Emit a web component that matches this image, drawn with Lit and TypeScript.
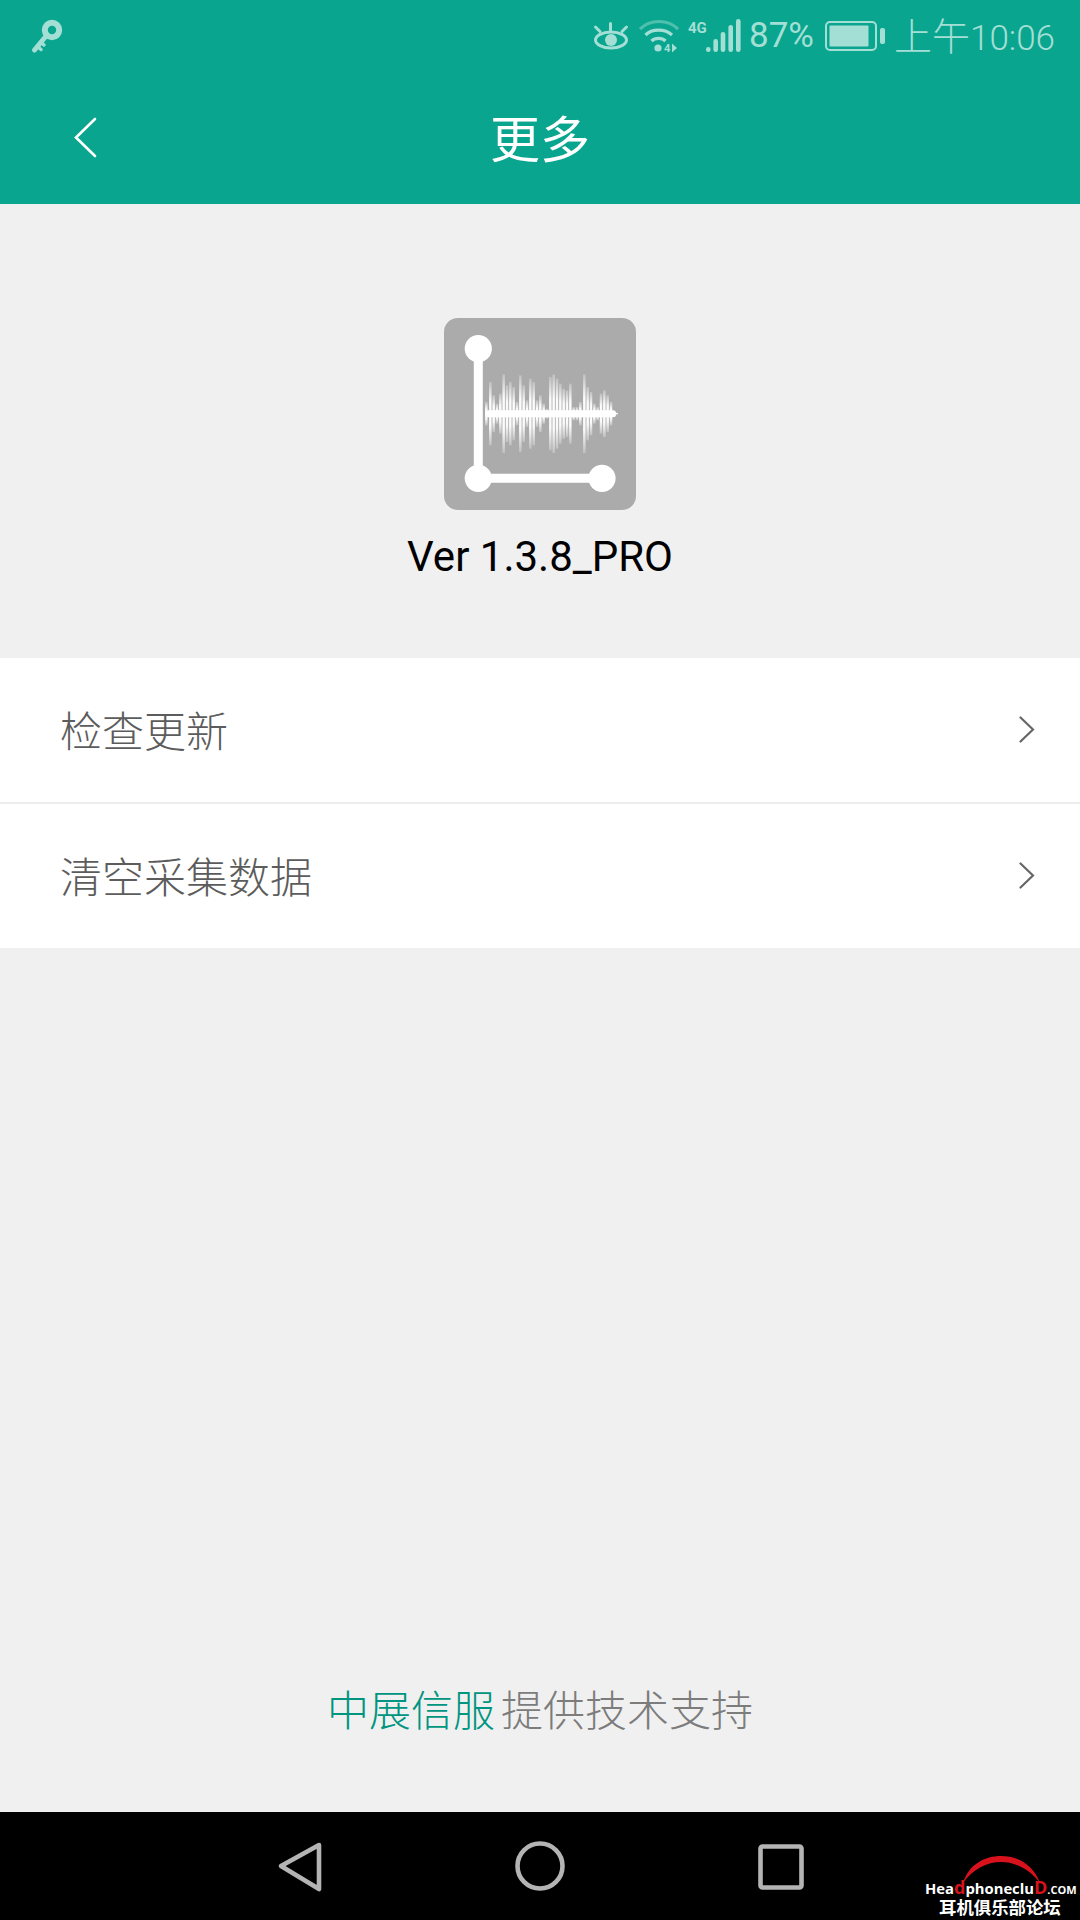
import { LitElement, html, css, svg } from "lit";
import { customElement } from "lit/decorators.js";

const WAVE: [number, number][] = [
  [197,35],[209,95],[219,55],[229,30],[239,60],[249,118],[259,85],[269,95],[279,80],[289,35],
  [299,115],[309,85],[319,40],[329,105],[339,95],[349,40],[359,55],[369,30],[379,15],[389,110],
  [399,118],[409,105],[419,90],[429,75],[439,70],[449,90],[459,20],[469,20],[479,35],[491,118],
  [501,80],[511,65],[521,30],[531,20],[541,60],[551,70],[561,55],[571,35],[581,10],[588,3],
];

const chevron = html`<svg class="chev" width="16" height="28" viewBox="0 0 16 28" fill="none">
  <path d="M1.5 1.5L14 13.5L1.5 25.5" stroke="#666" stroke-width="2.2" stroke-linecap="round" stroke-linejoin="miter"/>
</svg>`;

@customElement("app-root")
export class AppRoot extends LitElement {
  static styles = css`
    :host { display: block; width: 1080px; height: 1920px; overflow: hidden; background: #f0f0f0;
      font-family: Roboto, "Noto Sans CJK SC", sans-serif; }
    .page { display: flex; flex-direction: column; height: 1920px; }
    .head { background: #0aa58f; height: 204px; flex: none; display: flex; flex-direction: column; }
    .status { height: 72px; display: flex; align-items: center; padding: 0 25px 0 30px; color: #a3dfd5; }
    .status svg { display: block; flex: none; }
    .spacer { flex: 1; }
    .pct { font-size: 35px; font-weight: 400; margin: 0 11px 0 7px; line-height: 72px; }
    .time { font-size: 35px; font-weight: 300; margin-left: 8px; line-height: 72px; white-space: nowrap; }
    .time span { font-family: "Noto Sans CJK SC", sans-serif; font-size: 38px; font-weight: 300; }
    .eye { margin-right: 9px; }
    .wifi { margin-right: 9px; }
    .g4 { font-size: 15px; font-weight: 700; fill: #a3dfd5; font-family: Roboto, sans-serif; }
    .w4 { font-size: 11px; font-weight: 700; fill: #a3dfd5; font-family: Roboto, sans-serif; }
    .bar { flex: 1; display: flex; align-items: center; padding-left: 74px; position: relative; }
    .title { position: absolute; left: 0; right: 0; text-align: center; color: #fff; font-size: 50px;
      font-family: "Noto Sans CJK SC", sans-serif; font-weight: 400; line-height: 132px; top: -2px; }
    .main { flex: 1; display: flex; flex-direction: column; align-items: stretch; }
    .about { display: flex; flex-direction: column; align-items: center; padding-top: 114px; height: 454px; box-sizing: border-box; }
    .logo { display: block; }
    .ver { font-size: 42px; line-height: 50px; color: #000; margin-top: 22px; }
    .list { background: #fff; }
    .row { height: 144px; display: flex; align-items: center; justify-content: space-between;
      padding: 0 45px 0 60px; font-size: 42px; color: #5c5c5c; font-family: "Noto Sans CJK SC", sans-serif; font-weight: 300; }
    .row span { position: relative; top: -2px; }
    .row + .row { border-top: 2px solid #ececec; }
    .chev { display: block; }
    .foot { margin-top: auto; text-align: center; font-size: 42px; line-height: 60px; padding-bottom: 74px;
      font-family: "Noto Sans CJK SC", sans-serif; font-weight: 300; color: #7c7c7c; display: flex; justify-content: center; gap: 6px; white-space: nowrap; }
    .foot b { font-weight: 300; color: #009580; }
    .nav { height: 108px; flex: none; background: #000; display: flex; align-items: center; position: relative; }
    .nav > svg { display: block; }
    .mark { position: absolute; left: 925px; top: 44px; width: 155px; height: 64px; color: #fff; }
    .mark svg { position: absolute; left: 0; top: 0; }
    .brand { position: absolute; left: 0; top: 22px; font: 700 14.8px/18px "Open Sans", sans-serif; white-space: nowrap; height: 18px; }
    .brand i { display: inline-block; font-style: normal; color: #d8121c; font-size: 18px; line-height: 18px; }
    .brand small { display: inline-block; font-size: 11px; line-height: 18px; }
    .cn { position: absolute; left: 14px; top: 41px; font: 700 17.4px/20px "Noto Sans CJK SC", sans-serif; white-space: nowrap; }
  `;

  private logo() {
    const cy = 95.7;
    return html`<svg class="logo" width="192" height="192" viewBox="0 0 192 192">
      <defs>
        <linearGradient id="g" x1="0" y1="0" x2="0" y2="1">
          <stop offset="0" stop-color="#fff" stop-opacity="0.25"/>
          <stop offset="0.3" stop-color="#fff" stop-opacity="0.95"/>
          <stop offset="0.7" stop-color="#fff" stop-opacity="0.95"/>
          <stop offset="1" stop-color="#fff" stop-opacity="0.25"/>
        </linearGradient>
      </defs>
      <rect width="192" height="192" rx="14" fill="#ababab"/>
      ${WAVE.map(([x, h]) => {
        const px = (x - 70) / 3;
        const hh = h / 3;
        return svg`<rect x=${px - 1.25} y=${cy - hh} width="2.5" height=${hh * 2} fill="url(#g)"/>`;
      })}
      <rect x="41" y="92.2" width="131" height="7" rx="3.5" fill="#fff"/>
      <path d="M34.3 30.7V160.3H158" stroke="#fff" stroke-width="9" fill="none"/>
      <circle cx="34.3" cy="30.7" r="13.6" fill="#fff"/>
      <circle cx="34.3" cy="160.3" r="13.6" fill="#fff"/>
      <circle cx="158" cy="160.3" r="13.6" fill="#fff"/>
    </svg>`;
  }

  render() {
    return html`<div class="page">
      <div class="head">
        <div class="status">
          <svg width="34" height="38" viewBox="0 0 34 38" fill="none">
            <circle cx="22" cy="13" r="7.2" stroke="#a3dfd5" stroke-width="6"/>
            <path d="M16.5 18.5L4.5 33" stroke="#a3dfd5" stroke-width="5" stroke-linecap="round"/>
            <path d="M7.5 29.5l3.5 3M11 25.5l3 2.5" stroke="#a3dfd5" stroke-width="3.5" stroke-linecap="round"/>
          </svg>
          <div class="spacer"></div>
          <svg class="eye" width="38" height="28" viewBox="0 0 38 28" fill="none">
            <ellipse cx="19" cy="18" rx="15.5" ry="8" stroke="#a3dfd5" stroke-width="3"/>
            <circle cx="19" cy="18" r="6" fill="#a3dfd5"/>
            <path d="M18.5 1.5V8M3.5 5L8 9.5M34.5 5L30 9.5" stroke="#a3dfd5" stroke-width="3" stroke-linecap="round"/>
          </svg>
          <svg class="wifi" width="40" height="38" viewBox="0 -2 40 38" fill="none">
            <path d="M1 10C11 0 29 0 39 10" stroke="#a3dfd5" stroke-opacity="0.45" stroke-width="3.2"/>
            <path d="M6.5 16C13 9.5 26 9.5 33 16" stroke="#a3dfd5" stroke-width="3.2"/>
            <path d="M12.5 22C16 18.5 23 18.5 26.5 22" stroke="#a3dfd5" stroke-width="3.2"/>
            <circle cx="19" cy="29" r="3.6" fill="#a3dfd5"/>
            <text class="w4" x="25" y="33">4</text>
            <path d="M33 24.5L38 29L33 33.5Z" fill="#a3dfd5"/>
          </svg>
          <svg width="54" height="36" viewBox="0 0 54 36">
            <text class="g4" x="0" y="15">4G</text>
            <rect x="18" y="29" width="4.6" height="5" rx="2.3" fill="#a3dfd5"/>
            <rect x="25.4" y="21" width="4.6" height="13" rx="2.3" fill="#a3dfd5"/>
            <rect x="32.7" y="14" width="4.6" height="20" rx="2.3" fill="#a3dfd5"/>
            <rect x="40.4" y="7" width="4.6" height="27" rx="2.3" fill="#a3dfd5"/>
            <rect x="48" y="1" width="4.6" height="33" rx="2.3" fill="#a3dfd5"/>
          </svg>
          <span class="pct">87%</span>
          <svg width="61" height="30" viewBox="0 0 61 30" fill="none">
            <rect x="1" y="1" width="50" height="28" rx="4" stroke="#a3dfd5" stroke-width="2"/>
            <rect x="4.5" y="4.5" width="39" height="21" rx="1" fill="#a3dfd5"/>
            <rect x="55" y="7" width="5" height="16" rx="2" fill="#a3dfd5"/>
          </svg>
          <span class="time"><span>上午</span>10:06</span>
        </div>
        <div class="bar">
          <svg width="24" height="42" viewBox="0 0 24 42" fill="none">
            <path d="M21 2L2 20.5L21 39" stroke="#fff" stroke-width="2.6" stroke-linecap="round"/>
          </svg>
          <div class="title">更多</div>
        </div>
      </div>
      <div class="main">
        <div class="about">
          ${this.logo()}
          <div class="ver">Ver 1.3.8_PRO</div>
        </div>
        <div class="list">
          <div class="row"><span>检查更新</span>${chevron}</div>
          <div class="row"><span>清空采集数据</span>${chevron}</div>
        </div>
        <div class="foot"><b>中展信服</b><span>提供技术支持</span></div>
      </div>
      <div class="nav">
        <svg width="1080" height="108" viewBox="0 0 1080 108" fill="none" stroke="#b4b4b4" stroke-width="4.6">
          <path d="M319 33L281 54L319 77Z" stroke-linejoin="round"/>
          <circle cx="540" cy="54" r="22.5"/>
          <rect x="760.5" y="34.5" width="41" height="41" rx="2"/>
        </svg>
        <div class="mark">
          <svg width="155" height="40" viewBox="0 0 155 40" fill="none">
            <path d="M38 27C44 8 60 0 76 0C92 0 108 8 115 27C105 13 90 6 76 6C62 6 48 13 38 27Z" fill="#d8121c"/>
          </svg>
          <span class="brand">Hea<i>d</i>phoneclu<i>D</i><small>.COM</small></span>
          <span class="cn">耳机俱乐部论坛</span>
        </div>
      </div>
    </div>`;
  }
}
